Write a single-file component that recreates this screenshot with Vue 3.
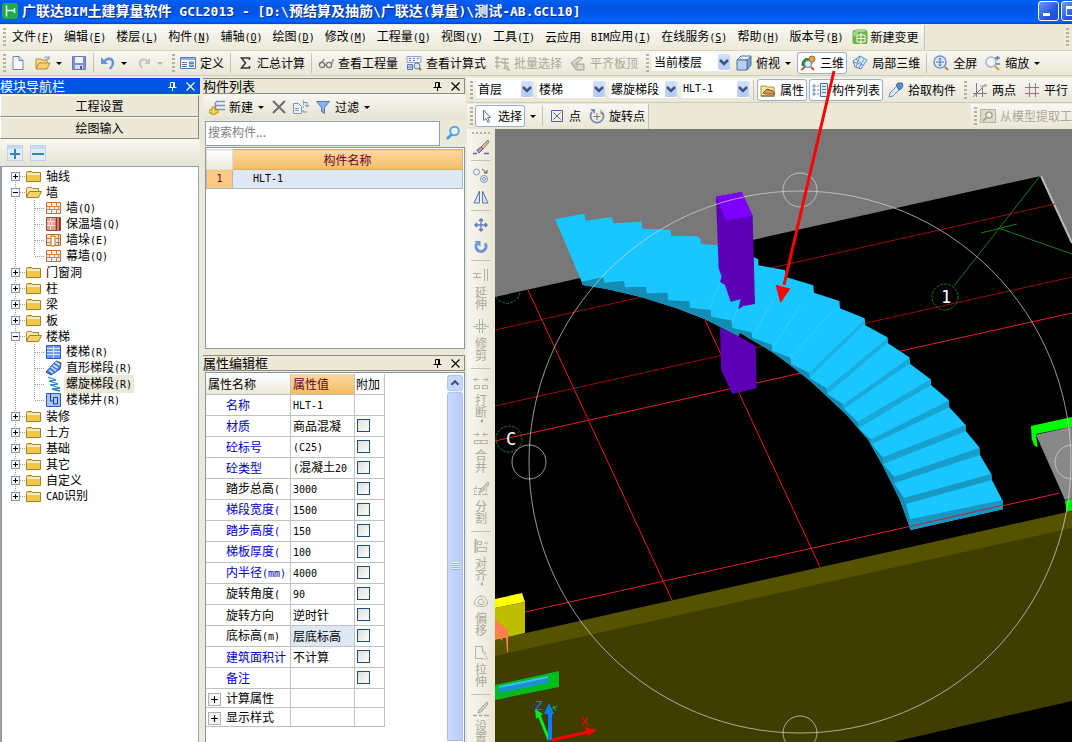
<template>
  <div class="app">
    <!-- 标题栏 -->
    <header class="titlebar">
      <Icon name="logo" />
      <h1><Mix text="广联达BIM土建算量软件 GCL2013 - [D:\预结算及抽筋\广联达(算量)\测试-AB.GCL10]" /></h1>
      <div class="win-btns">
        <button aria-label="最小化"><i class="min"></i></button>
        <button aria-label="最大化"><i class="max"></i></button>
      </div>
    </header>

    <!-- 菜单 -->
    <nav class="menubar">
      <div class="menu-inner">
        <i class="grip"></i>
        <button v-for="m in menus" :key="m.text" class="menu-item">
          <Mix :text="m.text" /><span v-if="m.key" class="lat">(<u>{{ m.key }}</u>)</span>
        </button>
        <button class="menu-item change"><Icon name="change" />新建变更</button>
      </div>
      <i class="grip last"></i>
    </nav>

    <!-- 主工具栏 -->
    <div class="toolbar main-tools">
      <template v-for="(t, i) in mainTools" :key="i">
        <i v-if="t === '|'" class="sep"></i>
        <i v-else-if="t === ':'" class="grip"></i>
        <label v-else-if="t.select" class="combo wide">
          <select :aria-label="t.select"><option>{{ t.select }}</option></select>
          <span class="arrow"><Icon name="down" /></span>
        </label>
        <button v-else class="tool" :class="{ pressed: t.on }" :disabled="t.off" :aria-label="t.label || t.text">
          <Icon :name="t.icon" />
          <span v-if="t.text">{{ t.text }}</span>
          <b v-if="t.caret" class="caret"></b>
        </button>
      </template>
    </div>

    <div class="body">
      <!-- 模块导航栏 -->
      <aside class="nav">
        <div class="panel-head active">
          <h2>模块导航栏</h2>
          <Icon name="pin" /><Icon name="close" />
        </div>
        <button class="nav-btn">工程设置</button>
        <button class="nav-btn">绘图输入</button>
        <div class="nav-tools">
          <button aria-label="展开"><Icon name="plus" /></button>
          <button aria-label="折叠"><Icon name="minus" /></button>
        </div>
        <ul class="tree">
          <li v-for="(n, i) in tree" :key="n.text">
            <div class="node">
              <svg class="guide" width="26" height="16" viewBox="0 0 26 16">
                <path class="dots" :d="rootGuide(i)" />
                <rect x="11.5" y="4.5" width="8" height="8" fill="#fbfbf8" stroke="#7898b5" />
                <path :d="n.open ? 'M13 8.5h5' : 'M13 8.5h5M15.5 6v5'" stroke="#000" />
              </svg>
              <Icon :name="n.open ? 'folderOpen' : 'folder'" />
              <span class="name"><Mix :text="n.text" /></span>
            </div>
            <ul v-if="n.open">
              <li v-for="(c, j) in n.children" :key="c.text" class="node">
                <svg class="guide" width="46" height="16" viewBox="0 0 46 16">
                  <path class="dots" :d="'M15.5 0v16M34.5 0v' + (j === n.children.length - 1 ? 8 : 16) + 'M35 8.5h10'" />
                </svg>
                <Icon :name="c.icon" />
                <span class="name" :class="{ selected: c.selected }"><Mix :text="c.text" /></span>
              </li>
            </ul>
          </li>
        </ul>
      </aside>

      <div class="middle">
        <!-- 构件列表 -->
        <section class="panel list-panel">
          <div class="panel-head">
            <h2>构件列表</h2>
            <Icon name="pin" /><Icon name="close" />
          </div>
          <div class="list-tools">
            <button class="tool"><Icon name="new" /><span>新建</span><b class="caret"></b></button>
            <button class="tool" aria-label="删除"><Icon name="del" /></button>
            <button class="tool" aria-label="复制"><Icon name="copyDoc" /></button>
            <button class="tool"><Icon name="filter" /><span>过滤</span><b class="caret"></b></button>
          </div>
          <div class="search">
            <input type="text" v-model="keyword" placeholder="搜索构件..." aria-label="搜索构件">
            <button aria-label="搜索"><Icon name="search" /></button>
          </div>
          <div class="sheet">
            <table class="comp-table">
              <thead>
                <tr><th class="no"></th><th>构件名称</th></tr>
              </thead>
              <tbody>
                <tr><td class="no lat">1</td><td class="lat">HLT-1</td></tr>
              </tbody>
            </table>
          </div>
        </section>

        <!-- 属性编辑框 -->
        <section class="panel prop-panel">
          <div class="panel-head">
            <h2>属性编辑框</h2>
            <Icon name="pin" /><Icon name="close" />
          </div>
          <div class="sheet prop-sheet">
            <table class="prop-table">
              <thead>
                <tr><th class="c1">属性名称</th><th class="c2">属性值</th><th class="c3">附加</th></tr>
              </thead>
              <tbody>
                <tr v-for="p in props" :key="p.name">
                  <td class="pname" :class="{ blue: p.blue }"><Mix :text="p.name" /></td>
                  <td :class="{ focus: p.focus }"><Mix :text="p.value" /></td>
                  <td><input v-if="p.check !== false" type="checkbox" :aria-label="p.name"></td>
                </tr>
                <tr v-for="g in groups" :key="g" class="group">
                  <td><button class="expand" :aria-label="'展开' + g"><Icon name="expand" /></button>{{ g }}</td>
                  <td></td>
                  <td></td>
                </tr>
              </tbody>
            </table>
            <div class="scrollbar">
              <button aria-label="向上"><Icon name="up" /></button>
              <div class="thumb"><i></i></div>
            </div>
          </div>
        </section>
      </div>

      <main class="work">
        <div class="toolbar">
          <i class="grip"></i>
          <label v-for="(c, i) in combos" :key="c" class="combo" :class="{ short: i === 0 }">
            <select :class="{ lat: i === 3 }" :aria-label="c"><option>{{ c }}</option></select>
            <span class="arrow"><Icon name="down" /></span>
          </label>
          <i class="sep"></i>
          <button class="tool pressed"><Icon name="prop" /><span>属性</span></button>
          <button class="tool pressed"><Icon name="list" /><span>构件列表</span></button>
          <button class="tool"><Icon name="pick" /><span>拾取构件</span></button>
          <i class="grip"></i>
          <button class="tool"><Icon name="two" /><span>两点</span></button>
          <button class="tool"><Icon name="para" /><span>平行</span></button>
        </div>
        <div class="toolbar flat">
          <div class="tool-group">
            <i class="grip"></i>
            <button class="tool pressed"><Icon name="cursor" /><span>选择</span></button>
            <button class="tool slim" aria-label="选择方式"><b class="caret"></b></button>
            <i class="sep"></i>
            <button class="tool"><Icon name="point" /><span>点</span></button>
            <button class="tool"><Icon name="rotPoint" /><span>旋转点</span></button>
          </div>
          <div class="tool-group docked">
            <i class="grip"></i>
            <button class="tool slim" disabled><Icon name="extract" /><span>从模型提取工</span></button>
          </div>
        </div>

        <div class="stage">
          <div class="side-tools">
            <i class="grip-h"></i>
            <template v-for="(t, i) in sideTools" :key="i">
              <i v-if="t === '|'" class="hsep"></i>
              <button v-else :class="{ labelled: t.text }" :disabled="!!t.text" :aria-label="t.text || t.label">
                <Icon :name="t.icon" />
                <span v-if="t.text">{{ t.text }}</span>
                <b v-if="t.more" class="more"></b>
              </button>
            </template>
          </div>

          <!-- 三维视图 -->
          <svg class="scene" viewBox="495 129 577 613" preserveAspectRatio="xMinYMin slice">
            <rect x="495" y="129" width="577" height="613" fill="#787878" />
            <path d="M495 297L1041 176L1072 243V742H495Z" fill="#000" />
            <path d="M1041 176L1072 243" stroke="#bbb" stroke-width="2" />

            <g stroke="#9c0d0d" fill="none">
              <path d="M495 330L1055 204M495 406L1072 277" />
              <path d="M495 441L1072 313M525 612L1060 493M528 290L672 600M705 320L820 567" stroke="#e61c1c" />
            </g>

            <g stroke="#1d7a1d" fill="none">
              <path d="M954 286L1040 176M981 233L1017 224M998 228L1072 254" />
              <circle cx="945" cy="297" r="13" stroke-dasharray="3 1" />
              <circle cx="509" cy="439" r="13" stroke-dasharray="3 1" />
              <path d="M496 297a13 13 0 0 0 24 -5" stroke-dasharray="3 1" />
            </g>
            <text x="946" y="303" class="axis-no">1</text>
            <text x="511" y="445" class="axis-no">C</text>

            <!-- 楼梯与柱 -->
            <g transform="translate(740 170) scale(.3333)">
              <path d="M873 768L996 741V770L888 792L893 832L882 826L875 805Z" fill="#0f0" />
              <path d="M888 794L996 770V985L975 990Z" fill="#888" />
              <path d="M975 992L996 985V1022L980 1026Z" fill="#0e0" />

              <path d="M-60 472L-5 498L47 528L50 655L-23 672L-57 600Z" fill="#5c00b8" />
              <path :d="stairBody" fill="#1ac6ff" />
              <path :d="stairSide" fill="#158cb3" />
              <path v-for="(r, i) in risers" :key="i" :d="riserPath(r)" :fill="r[8]" />
              <path d="M-90 412L-60 340M-25 460L-5 412M38 500L102 385M100 530L185 400M152 565L275 425" stroke="#38ceff" stroke-width="3" fill="none" />
              <path d="M512 1069L788 1006" stroke="#c0202c" stroke-width="3" />

              <path d="M-72 80L5 66L38 138L45 402L10 408L-5 418L2 388L-28 395L-45 345L-60 335L-55 320L-64 295Z" fill="#5c00b8" />
              <path d="M-72 80L5 66L38 138L-42 152Z" fill="#7d00ff" />
            </g>

            <!-- 前方墙体 -->
            <path d="M495 640L1072 511V742H495Z" fill="#565300" />
            <path d="M495 656L1072 528V742H495Z" fill="#3f3e00" />
            <path d="M893 742L1072 701V742Z" fill="#000" />
            <path d="M495 599L522 593L525 602L495 608Z" fill="#ff0" />
            <path d="M495 608L525 602V633L495 640Z" fill="#bebe00" />
            <path d="M495 619L508 630V652H507L506 638L503 637L502 641L500 638L495 639Z" fill="#ff7f50" />
            <path d="M495 685L559 671V687L495 700Z" fill="#00bc1c" />
            <path d="M499 686L548 676V683L499 693Z" fill="#1e8fd0" />
            <path d="M499 686L548 676V678L499 688Z" fill="#30c8e8" />

            <g stroke="#d8d8d8" stroke-opacity=".7" fill="none">
              <circle cx="800" cy="462" r="271" />
              <circle cx="800" cy="190" r="17" />
              <circle cx="529" cy="462" r="17" />
              <circle cx="1072" cy="462" r="17" />
              <circle cx="800" cy="733" r="17" />
            </g>

            <!-- 坐标轴 -->
            <g fill="none" stroke-width="3">
              <path d="M549 740L539 715" stroke="#0e2" />
              <path d="M550 740V711" stroke="#0a7cff" stroke-width="4" />
              <path d="M552 740L588 732" stroke="#f00" />
            </g>
            <path d="M535 709L543 714L536 719Z" fill="#0e2" />
            <path d="M549 703L554 714H544Z" fill="#0a7cff" />
            <path d="M597 730L585 727L588 736Z" fill="#f00" />
            <path d="M551 709L557 706M553 706L556 711" stroke="#0c2" />
            <text x="535" y="710" class="axis-name z">Z</text>
            <text x="580" y="726" class="axis-name x">X</text>
          </svg>
        </div>
      </main>
    </div>

    <!-- 指示箭头 -->
    <svg class="pointer" width="70" height="240" viewBox="0 0 70 240">
      <path d="M64 2L14 216" stroke="#f00" stroke-width="3" />
      <path d="M5 216L20 219L11 234Z" fill="#f00" transform="rotate(3 12 225)" />
    </svg>
  </div>
</template>

<script setup>
import { h, ref } from 'vue'

const keyword = ref('')

// 图标
const icons = {
  logo: '<rect width="16" height="16" rx="3" fill="#22a94f"/><path d="M4.500 2.500v11M4.500 7.500h8M12.500 5v5" stroke="#eafff0" stroke-width="1.500" fill="none"/>',
  change: '<rect x=".5" y="1" width="15" height="14" rx="2" fill="#6cb33f"/><path d="M0 5l5-5h8v3H6L3 8z" fill="#a6d785"/><path d="M5 6h8v7H5zM9 4v11M5 9.500h8" stroke="#fff" fill="none"/>',
  newDoc: '<path d="M2 1.500h6l4 4v9H2z" fill="#f5f9ff" stroke="#7487aa"/><path d="M8 1.500v4h4" fill="#c6d6ee" stroke="#7487aa"/>',
  open: '<path d="M1 13V4h5l1 1h5v3" fill="#f8dc8f" stroke="#b58a3a"/><path d="M1 14l3-6h11l-3 6z" fill="#fbd06a" stroke="#b58a3a"/><path d="M9 3c2-2 4-1 5 1m0-3v3h-3" stroke="#7b93b8" fill="none"/>',
  save: '<path d="M1.500 1.500h13v13h-13z" fill="#7f8fd0" stroke="#6a79b8"/><path d="M4 2h8v6H4z" fill="#eef3ff"/><path d="M4 10h8v4H4z" fill="#d5dcf2"/><path d="M9 11h2v3H9z" fill="#4a5795"/>',
  undo: '<path d="M4 7c3-5 9-4 9 1 0 3-2 4-3 6" stroke="#6a93dd" stroke-width="2.400" fill="none"/><path d="M1 2v7h7z" fill="#6a93dd"/>',
  redo: '<path d="M12 7c-3-4-8-3-8 1 0 3 1 4 2 5" stroke="#c3c3c0" stroke-width="2" fill="none"/><path d="M14 3v6H8z" fill="#c3c3c0"/>',
  define: '<path d="M.5 2.500h15v11H.5z" fill="#fff" stroke="#5577b5"/><path d="M1 3h14v2H1z" fill="#8fb0e8"/><path d="M2 7.500h5M2 9.500h5M2 11.500h5" stroke="#4a70b8"/><path d="M9.500 7h4v1.500h-4zM9.500 10h4v1.500h-4z" fill="#dbe7fa" stroke="#4a70b8"/>',
  sum: '<path d="M12.500 5V3H4.500l4 5-4 5h8v-2" stroke="#333" stroke-width="1.500" fill="none"/>',
  glasses: '<path d="M6.600 10h1.800M1.500 9l5-5M13.500 9l2-5" stroke="#888" stroke-width="1.300"/><circle cx="4" cy="10" r="2.600" fill="none" stroke="#777" stroke-width="1.300"/><circle cx="11" cy="10" r="2.600" fill="none" stroke="#777" stroke-width="1.300"/>',
  formula: '<path d="M1 1.500h14v6H1z" fill="#eef3fa" stroke="#8ea5c8"/><path d="M3 3.500h2m2 0h2m2 0h2M3 5.500h2m2 0h2" stroke="#6180ae"/><path d="M1.500 9.500h5v5h-5zM1 12h6" fill="#c9d9f0" stroke="#5a78b0"/><circle cx="11" cy="11" r="3" fill="#d5e6f7" stroke="#778"/><path d="M13 13l2 2" stroke="#a76a38" stroke-width="2"/>',
  batch: '<path d="M1 3h5M1 7h8M1 11h5M3 1v13M7 4h8M11 3v9M8 8h7M13 11l2 4-5-2z" stroke="#b5b2a4" stroke-width="1.300" fill="none"/>',
  slab: '<path d="M1 8l8-6 4 1-7 6h8v6H6z" fill="#c8c5b9" stroke="#a9a698"/><path d="M3 8l7-4M8 11h5M8 13h5" stroke="#f3f1e8"/>',
  cube: '<path d="M1 5l4-4h10l-4 4z" fill="#e8f1fb" stroke="#51709c"/><path d="M11 5l4-4v9l-4 5z" fill="#7fa3d1" stroke="#51709c"/><path d="M1 5h10v10H1z" fill="#b5d0ee" stroke="#51709c"/>',
  three: '<path d="M2 10c0-6 5-8 8-5l2 4c-3 3-7 4-10 1z" fill="#2e9b3c" stroke="#176325"/><circle cx="12" cy="4" r="3" fill="#e7a63a" stroke="#a86b14"/><circle cx="8" cy="9" r="3.500" fill="#d7efff" stroke="#5b7f9f"/><path d="M5 12l-4 3M11 12l3 3" stroke="#d05a20" stroke-width="2"/>',
  part3: '<path d="M1 6l7-5 7 4-6 9-6-2z" fill="#dbe9f8" stroke="#6287b8"/><path d="M4 4l7 6M8 1l-4 11M12 4L7 13M1 7l10 3" stroke="#6f96c8" fill="none"/>',
  full: '<circle cx="7" cy="7" r="6" fill="#e1edfa" stroke="#7094c6" stroke-width="1.500"/><path d="M7 3v8M3 7h8M5.500 4.500L7 3l1.500 1.500M5.500 9.500L7 11l1.500-1.500" stroke="#4b73b4" fill="none"/><path d="M12 12l3 3" stroke="#b98b59" stroke-width="2.400"/>',
  zoom: '<circle cx="6" cy="7" r="5" fill="#f0f6fc" stroke="#9fb3ca" stroke-width="1.500"/><path d="M10 3h5M12.500 1v4M11 9h4" stroke="#5e7fae" stroke-width="1.500"/><path d="M10 11l4 4" stroke="#d9a13e" stroke-width="2.400"/>',
  down: '<path d="M4 6l4 4 4-4" stroke="#3a577f" stroke-width="2.600" fill="none"/>',
  up: '<path d="M4 10l4-4 4 4" stroke="#3a577f" stroke-width="2.600" fill="none"/>',
  pin: '<path d="M6.500 4.500h4v5h-4zM9.500 4v6M4.500 9.500h8M8.500 10v3" stroke="currentColor" fill="none"/>',
  close: '<path d="M4.500 4.500l8 8M12.500 4.500l-8 8" stroke="currentColor" stroke-width="1.100"/>',
  plus: '<rect x=".5" y=".5" width="15" height="15" fill="#e3ecfa" stroke="#c0d2ee"/><path d="M1 1h14v3H1z" fill="#c7daf5"/><path d="M3 9h10M8 4v10" stroke="#3287b8" stroke-width="2"/>',
  minus: '<rect x=".5" y=".5" width="15" height="15" fill="#e3ecfa" stroke="#c0d2ee"/><path d="M1 1h14v3H1z" fill="#c7daf5"/><path d="M2 9h12" stroke="#3287b8" stroke-width="2"/>',
  folder: '<path d="M.5 13.500V4.500l1-1h4l1 1h8v9z" fill="#f3c748" stroke="#a2822f"/><path d="M1 6h13" stroke="#fdf0bd" stroke-width="2"/>',
  folderOpen: '<path d="M.5 13.500V4.500l1-1h4l1 1h6v3" fill="#fbe7a4" stroke="#a2822f"/><path d="M.5 13.500l3-6h12l-3 6z" fill="#f8d465" stroke="#a2822f"/>',
  wall: '<path d="M.5 2.500h14v11H.5z" fill="#fdf1e6" stroke="#c36d35"/><path d="M1 6.500h14M1 9.500h14M5.500 3v3M10.500 3v3M3.500 7v2M8.500 7v2M12.500 7v2M5.500 10v3M10.500 10v3" stroke="#d5824c"/>',
  insWall: '<path d="M.5 1.500h14v13H.5z" fill="#d9a394" stroke="#a14b3a"/><path d="M1 5.500h8M1 9.500h8M4.500 2v3M3 6v3M6 6v3M4.500 10v4" stroke="#f6e0da"/><path d="M10.500 2v12M13.500 2v12" stroke="#9c2d1c" stroke-width="1.500"/>',
  stack: '<path d="M.5 2.500h14v11H.5z" fill="#fbe6d2" stroke="#b56a2c"/><path d="M5 4h4v10H5z" fill="#fff" stroke="#b56a2c"/><path d="M1 6.500h4M1 10.500h4M12.500 3v10M10 6.500h5M10 10.500h5" stroke="#c77b3e"/>',
  stair: '<path d="M.5 1.500h14v13H.5z" fill="#6c98ee" stroke="#2f58b8"/><path d="M1 4.500h13M1 7.500h13M1 10.500h13M7.500 2v12" stroke="#dce8ff"/>',
  straight: '<path d="M0 12L10 1l5 2-1 6-9 6z" fill="#4b80dc" stroke="#1c439a"/><path d="M3 10l4 3M5 7l5 4M7 5l5 3M9 2l5 3" stroke="#d4e4ff" stroke-width="1.500"/>',
  spiral: '<path d="M2 1l8 3-7 1 9 3-8 1 10 3-8 1 8 2" stroke="#2a86c8" fill="none" stroke-width="1.300"/>',
  well: '<path d="M.5 1.500h14v13H.5z" fill="#a9c4fb" stroke="#2f58b8"/><path d="M4.500 2v7h3V5.500h4V12h-4V9" stroke="#173f9f" fill="none"/>',
  new: '<path d="M7 2.500h9M7 6.500h9M7 10.500h9M6.500 3v8" stroke="#7b90b5" stroke-width="1.500"/><path d="M3 8h3v3h3v3H6v2H3v-2H0v-3h3z" fill="#f6d64d" stroke="#b09020"/>',
  del: '<path d="M2 2l12 12M14 2L2 14" stroke="#6c6c6c" stroke-width="2"/>',
  copyDoc: '<path d="M.5 4.500h5l3 3v7h-8z" fill="#f4f8ff" stroke="#8094bd"/><path d="M2 9.500h4M2 11.500h4M10 3.500h4v4M12 6l2 2 2-2M14 13h-4v-2" stroke="#7a90bd" fill="none"/><path d="M10.500 1v8" stroke="#9aabd0" stroke-dasharray="2 1"/>',
  filter: '<path d="M1.500 2.500h13l-5 6v6l-3-2v-4z" fill="#8fb2ec" stroke="#5577bb"/>',
  search: '<circle cx="9.500" cy="6" r="4.300" fill="#e6f5ff" stroke="#55a8e6" stroke-width="2"/><path d="M6.500 9.500L2 14" stroke="#4a9bdc" stroke-width="2.600"/>',
  expand: '<path d="M2 8h12M8 2v12" stroke="#000" stroke-width="2"/>',
  prop: '<path d="M1 4h5l1 1h7v9H1z" fill="#fbe6a8" stroke="#b48a34"/><path d="M3 11l4-4 6 2 2 3H6z" fill="#d89a54" stroke="#7c5324"/><path d="M1 14h14" stroke="#6c5a30"/>',
  list: '<path d="M1 3h2v2H1zM1 7h2v2H1zM1 11h2v2H1zM5 4h2M5 8h2M5 12h2" stroke="#6f89b5" fill="none"/><path d="M8.500 1.500h7v13h-7z" fill="#e5effd" stroke="#4c6fae"/><path d="M10 4.500h4M10 7.500h4M10 10.500h4" stroke="#4c6fae"/>',
  pick: '<path d="M1 15l1-4 7-7 3 3-7 7z" fill="#dbeafa" stroke="#6c89ae"/><path d="M8 3l2-2h4l1 3-2 3-2 1z" fill="#5b93c8" stroke="#3b6a9c"/>',
  two: '<path d="M4.500 1v14M1 11.500h14M1 15L14 2M10.500 6v9" stroke="#7e7b86" fill="none"/><path d="M8 4h7" stroke="#b28cae"/>',
  para: '<path d="M5.500 1v14M11.500 1v14" stroke="#7c86ac"/><path d="M1 5.500h14M1 11.500h14" stroke="#b8675f"/>',
  cursor: '<path d="M5.500 2v10.500l2.500-2 2 4 1.500-1-2-4h3z" fill="#fff" stroke="#5d6f96"/>',
  point: '<path d="M2.500 2.500h11v11h-11zM4.500 4.500l7 7M11.500 4.500l-7 7" stroke="#5a5da0" fill="none"/>',
  rotPoint: '<path d="M3 4a6.500 6.500 0 1 0 10 0" stroke="#6c8db5" stroke-width="1.800" fill="none"/><path d="M1 1h5v5z" fill="#6c8db5"/><path d="M8 5v7M4.500 8.500h7" stroke="#777"/><path d="M12 2v4h3" stroke="#b66" fill="none"/>',
  extract: '<path d="M.5 1.500h15v13H.5z" fill="#dedbcd" stroke="#b5b2a4"/><circle cx="9" cy="7" r="3" fill="#f1efe6" stroke="#a9a698" stroke-width="1.500"/><path d="M7 9l-4 4" stroke="#a9a698" stroke-width="2"/>',
  eraser: '<path d="M15 1L8 8l2 2 6-7z" fill="#d9c49a" stroke="#8b7858"/><path d="M8 8l-4 3 2 3 4-4z" fill="#c79ac0" stroke="#77508a"/><path d="M0 14.500h4M11 14.500h5" stroke="#556a94" stroke-width="1.500"/>',
  copy: '<circle cx="3.500" cy="5" r="3" fill="none" stroke="#7e96c8"/><circle cx="11" cy="12" r="3.500" fill="none" stroke="#7e96c8"/><circle cx="11" cy="12" r="1.500" fill="none" stroke="#7e96c8"/><path d="M9 2l5 4M14 3v3h-3" stroke="#555" fill="none"/>',
  mirror: '<path d="M6.500 2v12H1zM9.500 2v12H15z" fill="#d6e2f7" stroke="#5a78b4"/>',
  move: '<path d="M8 2v12M2 8h12M6 4l2-2 2 2M6 12l2 2 2-2M4 6L2 8l2 2M12 6l2 2-2 2" stroke="#5b78b4" stroke-width="1.300" fill="none"/>',
  rotate: '<path d="M4 4.500a5 5 0 1 0 8 0" stroke="#6b93dc" stroke-width="3" fill="none"/><path d="M1.500 2h6v6z" fill="#6b93dc"/>',
  extend: '<path d="M0 6.500h8M0 10.500h8M3.500 6v5M11.500 2v12M14.500 2v12" stroke="#b5b2a4"/>',
  trim: '<path d="M0 8.500h5M11 8.500h5M6.500 1v14M9.500 1v14M3 6.500h10M3 10.500h10" stroke="#b5b2a4"/>',
  breakk: '<path d="M1 4.500h5M3 2.500l-2 2 2 2M10 4.500h5M13 2.500l2 2-2 2M1.500 10.500h5v3h-5zM9.500 10.500h5v3h-5z" stroke="#b5b2a4" fill="none"/>',
  merge: '<path d="M1 4.500h5M4 2.500l2 2-2 2M10 4.500h5M12 2.500l-2 2 2 2M1.500 10.500h13v3h-13zM8 10v4" stroke="#b5b2a4" fill="none"/>',
  split: '<path d="M1 7.500h9M1 13.500h14M3 5l-2 9M14 8l-2 6" stroke="#b5b2a4" stroke-dasharray="3 1"/><path d="M15 1L8 8l-2 4 4-2 6-7z" fill="#d5d2c4" stroke="#a9a698"/>',
  align: '<path d="M2.500 1v14" stroke="#b5b2a4" stroke-width="2"/><path d="M4.500 3.500h4v3h-4zM4.500 9.500h9v4h-9zM11 5h4" stroke="#b5b2a4" fill="none"/>',
  offset: '<path d="M1.500 10c0-3 3-7 6.500-7s6.500 4 6.500 7-3 3.500-6.500 3.500-6.500-.5-6.500-3.500z" fill="none" stroke="#b0ad9f"/><path d="M5 10c0-2 1.500-4 3-4s3 2 3 4-6 2-6 0z" fill="none" stroke="#b0ad9f"/>',
  stretch: '<path d="M10 14.500H2.500v-12h7v4l4 3" stroke="#b5b2a4" fill="none"/><path d="M9 7l6 8H9" stroke="#b5b2a4" stroke-dasharray="2 1" fill="none"/>',
  setup: '<path d="M14 1L6 9l-1 3 3-1 7-8z" fill="#d5d2c4" stroke="#a9a698"/><path d="M0 14.500h4M6 14.500h3M11 14.500h5" stroke="#a9a698" stroke-width="1.500"/>'
}

const Icon = ({ name }) =>
  h('svg', { class: 'icon', width: 16, height: 16, viewBox: '0 0 16 16', 'aria-hidden': 'true', innerHTML: icons[name] })
Icon.props = ['name']

// 中英文混排：西文用等宽字体
const Mix = ({ text }) =>
  h('span', { class: 'mix' }, (text || '').split(/([\x20-\x7e]+)/).filter(Boolean).map(s =>
    /^[\x20-\x7e]/.test(s) ? h('span', { class: 'lat' }, s) : s
  ))
Mix.props = ['text']

const menus = [
  { text: '文件', key: 'F' },
  { text: '编辑', key: 'E' },
  { text: '楼层', key: 'L' },
  { text: '构件', key: 'N' },
  { text: '辅轴', key: 'O' },
  { text: '绘图', key: 'D' },
  { text: '修改', key: 'M' },
  { text: '工程量', key: 'Q' },
  { text: '视图', key: 'V' },
  { text: '工具', key: 'T' },
  { text: '云应用' },
  { text: 'BIM应用', key: 'I' },
  { text: '在线服务', key: 'S' },
  { text: '帮助', key: 'H' },
  { text: '版本号', key: 'B' }
]

const mainTools = [
  ':',
  { icon: 'newDoc', label: '新建' },
  { icon: 'open', label: '打开', caret: true },
  { icon: 'save', label: '保存' },
  '|',
  { icon: 'undo', label: '撤销', caret: true },
  { icon: 'redo', label: '恢复', caret: true, off: true },
  ':',
  { icon: 'define', text: '定义' },
  '|',
  { icon: 'sum', text: '汇总计算' },
  '|',
  { icon: 'glasses', text: '查看工程量' },
  { icon: 'formula', text: '查看计算式' },
  { icon: 'batch', text: '批量选择', off: true },
  { icon: 'slab', text: '平齐板顶', off: true },
  ':',
  { select: '当前楼层' },
  { icon: 'cube', text: '俯视', caret: true },
  { icon: 'three', text: '三维', on: true },
  { icon: 'part3', text: '局部三维' },
  '|',
  { icon: 'full', text: '全屏' },
  { icon: 'zoom', text: '缩放', caret: true }
]

const combos = ['首层', '楼梯', '螺旋梯段', 'HLT-1']

const tree = [
  { text: '轴线' },
  {
    text: '墙',
    open: true,
    children: [
      { text: '墙(Q)', icon: 'wall' },
      { text: '保温墙(Q)', icon: 'insWall' },
      { text: '墙垛(E)', icon: 'stack' },
      { text: '幕墙(Q)', icon: 'wall' }
    ]
  },
  { text: '门窗洞' },
  { text: '柱' },
  { text: '梁' },
  { text: '板' },
  {
    text: '楼梯',
    open: true,
    children: [
      { text: '楼梯(R)', icon: 'stair' },
      { text: '直形梯段(R)', icon: 'straight' },
      { text: '螺旋梯段(R)', icon: 'spiral', selected: true },
      { text: '楼梯井(R)', icon: 'well' }
    ]
  },
  { text: '装修' },
  { text: '土方' },
  { text: '基础' },
  { text: '其它' },
  { text: '自定义' },
  { text: 'CAD识别' }
]

// 树的竖向连接线，首尾只画半截
const rootGuide = (i) => {
  const from = i === 0 ? 8 : 0
  const to = i === tree.length - 1 ? 8 : 16
  return `M15.5 ${from}V${to}M20 8.5h6`
}

const props = [
  { name: '名称', value: 'HLT-1', blue: true, check: false },
  { name: '材质', value: '商品混凝', blue: true },
  { name: '砼标号', value: '(C25)', blue: true },
  { name: '砼类型', value: '(混凝土20', blue: true },
  { name: '踏步总高(', value: '3000' },
  { name: '梯段宽度(', value: '1500', blue: true },
  { name: '踏步高度(', value: '150', blue: true },
  { name: '梯板厚度(', value: '100', blue: true },
  { name: '内半径(mm)', value: '4000', blue: true },
  { name: '旋转角度(', value: '90' },
  { name: '旋转方向', value: '逆时针' },
  { name: '底标高(m)', value: '层底标高', focus: true },
  { name: '建筑面积计', value: '不计算', blue: true },
  { name: '备注', value: '', blue: true }
]
const groups = ['计算属性', '显示样式']

const sideTools = [
  { icon: 'eraser', label: '删除' },
  '|',
  { icon: 'copy', label: '复制' },
  { icon: 'mirror', label: '镜像' },
  '|',
  { icon: 'move', label: '移动' },
  { icon: 'rotate', label: '旋转' },
  '|',
  { icon: 'extend', text: '延伸' },
  { icon: 'trim', text: '修剪' },
  '|',
  { icon: 'breakk', text: '打断', more: true },
  { icon: 'merge', text: '合并' },
  { icon: 'split', text: '分割' },
  '|',
  { icon: 'align', text: '对齐', more: true },
  { icon: 'offset', text: '偏移' },
  { icon: 'stretch', text: '拉伸' },
  '|',
  { icon: 'setup', text: '设置' }
]

// 螺旋梯段轮廓
const outer = '-555 147 -467 131 -463 152 -385 141 -380 160 -295 155 -293 176 -208 179 -206 198 -128 199 -118 206 -118 222 -65 226 42 262 55 268 55 286 135 300 140 322 220 346 222 368 298 393 300 415 374 445 376 466 442 502 444 520 508 562 510 581 572 628 573 645 626 690 628 712 677 765 678 784 718 832 720 855 754 912 756 930 788 992 788 1018 512 1080'
const inner = '480 990 430 890 385 810 320 735 262 680 210 632 150 585 100 548 40 512 0 488 -5 498 -60 470 -105 448 -190 415 -300 380 -400 357 -472 345'
const saw = '-475 335 -410 321 -407 338 -348 333 -345 352 -282 350 -280 370 -218 368 -215 391 -152 394 -150 413 -88 420 -86 440 -24 452 -23 474 35 487 37 503 95 524 97 542 152 563 154 583 208 608 210 625 260 655 262 672 310 703 312 716 353 755 355 775 393 808 395 823 428 862 430 882 462 920 462 940 490 982 498 1002 510 1048 512 1080'
const stairBody = `M${outer} ${inner} -475 335Z`
const stairSide = `M${saw} ${inner}Z`

// 踢面：内上、外上、外下、内下
const risers = [
  [208, 608, 374, 448, 376, 460, 210, 622, '#1ab2e4'],
  [260, 655, 442, 504, 444, 518, 262, 672, '#1aaee0'],
  [310, 703, 508, 564, 510, 580, 312, 716, '#19aadb'],
  [353, 755, 572, 628, 573, 645, 355, 775, '#19a8d8'],
  [393, 808, 626, 692, 628, 712, 395, 823, '#18a4d3'],
  [428, 862, 677, 765, 678, 784, 430, 882, '#18a0ce'],
  [462, 920, 718, 834, 720, 855, 462, 940, '#179dca'],
  [490, 984, 754, 912, 756, 930, 498, 1002, '#1799c5'],
  [510, 1048, 788, 990, 788, 1018, 512, 1080, '#1796c2']
]
const riserPath = (r) => `M${r.slice(0, 8).join(' ')}Z`
</script>

<style>
body {
  background: #ece9d8;
  overflow: hidden;
}

.icon {
  flex: none;
  display: block;
}

.mix {
  white-space: pre;
}

.lat {
  font-family: "DejaVu Sans Mono", monospace;
  font-size: 10px;
}

.titlebar .lat {
  font-size: 13px;
}
</style>

<style scoped>
.app {
  position: relative;
  display: flex;
  flex-direction: column;
  height: 100vh;
  overflow: hidden;
  background: #ece9d8;
  color: #000;
  font-family: "Noto Sans CJK SC", sans-serif;
  font-size: 12px;
  line-height: 16px;
}

button {
  margin: 0;
  padding: 0;
  border: 0;
  background: none;
  color: inherit;
  font-family: inherit;
  font-size: 12px;
  line-height: 16px;
  white-space: nowrap;
}

h1, h2, ul {
  margin: 0;
  padding: 0;
  list-style: none;
}

/* 标题栏 */
.titlebar {
  flex: none;
  display: flex;
  align-items: center;
  gap: 4px;
  height: 24px;
  padding-left: 2px;
  box-sizing: border-box;
  padding-bottom: 3px;
  background: linear-gradient(#0560f5, #0054e3 30%, #0058ee 65%, #0066ff 88%, #0046c8);
  color: #fff;
}

.titlebar h1 {
  flex: 1;
  font-size: 14px;
  line-height: 20px;
  font-weight: bold;
  text-shadow: 1px 1px #0a2a80;
  white-space: nowrap;
}

.win-btns {
  display: flex;
  gap: 2px;
  width: 34px;
  overflow: hidden;
}

.win-btns button {
  flex: none;
  display: flex;
  width: 21px;
  height: 20px;
  padding: 4px;
  box-sizing: border-box;
  border: 1px solid #fff;
  border-radius: 3px;
  background: linear-gradient(135deg, #6f9cf5, #2359d8 60%, #1c4fd0);
}

.min {
  align-self: flex-end;
  width: 7px;
  height: 3px;
  background: #fff;
}

.max {
  width: 7px;
  height: 6px;
  border: 1px solid #fff;
  border-top-width: 3px;
}

/* 菜单与工具栏 */
.menubar {
  flex: none;
  display: flex;
  align-items: center;
  justify-content: space-between;
  height: 26px;
  overflow: hidden;
  background: #ece9d8;
}

.menu-inner {
  display: flex;
  align-items: center;
  height: 25px;
  border-right: 1px solid #c5c2b2;
  background: linear-gradient(#fafaf7, #ece9d8);
}

.menu-item {
  padding: 0 5px;
}

.menu-inner .grip {
  margin-right: 1px;
}

.change {
  display: flex;
  gap: 3px;
  padding-left: 3px;
}

.toolbar {
  flex: none;
  display: flex;
  align-items: center;
  gap: 2px;
  height: 25px;
  overflow: hidden;
  box-sizing: border-box;
  background: linear-gradient(#f8f7f2, #e9e6d5);
  border-bottom: 1px solid #d0ccba;
}

.main-tools {
  height: 26px;
  border-top: 1px solid #d8d4c4;
}

.toolbar.flat {
  height: 26px;
  justify-content: space-between;
  background: #ece9d8;
  border: 0;
}

.tool-group {
  display: flex;
  align-items: center;
  gap: 2px;
  height: 25px;
  border-right: 1px solid #c5c2b2;
  background: linear-gradient(#f8f7f2, #e9e6d5);
}

.docked {
  gap: 1px;
  border: 0;
}

.grip {
  flex: none;
  width: 3px;
  height: 18px;
  margin-left: 3px;
  background: repeating-linear-gradient(#b5b19e 0 2px, transparent 2px 4px);
}

.grip.last {
  margin-right: 3px;
}

.sep {
  flex: none;
  width: 1px;
  height: 20px;
  margin: 0 1px;
  background: #c8c4b2;
}

.tool {
  flex: none;
  display: flex;
  align-items: center;
  gap: 4px;
  height: 22px;
  padding: 0 3px;
}

.tool:disabled {
  color: #aca899;
}

.tool.slim {
  padding: 0 2px;
}

.docked .tool {
  padding-right: 0;
}

.tool.pressed {
  background: #fff;
  border-radius: 3px;
  box-shadow: inset 0 0 0 1px #98b0cc;
}

.caret {
  width: 0;
  height: 0;
  margin: 0 1px;
  border: 3px solid transparent;
  border-top-color: #000;
  border-bottom: 0;
}

.tool:disabled .caret {
  border-top-color: #b5b2a4;
}

.combo {
  flex: none;
  display: flex;
  align-items: center;
  width: 68px;
  height: 18px;
  margin: 0 1px 3px;
  background: #fff;
}

.combo.short {
  width: 57px;
}

.combo.wide {
  width: 78px;
}

.combo select {
  flex: 1;
  min-width: 0;
  height: 18px;
  padding: 0 0 0 2px;
  border: 0;
  appearance: none;
  background: none;
  color: #000;
  font-family: inherit;
  font-size: 12px;
  white-space: nowrap;
}

.combo select.lat {
  font-family: "DejaVu Sans Mono", monospace;
  font-size: 10px;
}

.arrow {
  display: flex;
  align-items: center;
  justify-content: center;
  width: 12px;
  height: 16px;
  overflow: hidden;
  border-radius: 2px;
  background: linear-gradient(#d3e0fd, #b4c9f5);
}

/* 主体 */
.body {
  flex: 1;
  display: flex;
  min-height: 0;
  padding-top: 2px;
}

.nav {
  flex: none;
  display: flex;
  flex-direction: column;
  width: 200px;
  margin-right: 3px;
}

.panel-head {
  flex: none;
  display: flex;
  align-items: center;
  gap: 2px;
  height: 16px;
  padding-right: 1px;
  box-sizing: border-box;
  border: 1px solid #8e8b7c;
  border-left: 0;
}

.panel-head h2 {
  flex: 1;
  font-size: 13px;
  line-height: 12px;
  font-weight: normal;
}

.panel-head.active {
  margin-bottom: 1px;
  border-color: #0054e3;
  background: #0054e3;
  color: #fff;
}

.nav-btn {
  flex: none;
  height: 22px;
  margin-right: 1px;
  border: 1px solid #8e8b7c;
  border-top-color: #fff;
  border-left-color: #fff;
  background: #ece9d8;
}

.nav-tools {
  flex: none;
  display: flex;
  align-items: center;
  gap: 7px;
  height: 27px;
  padding-left: 7px;
  background: linear-gradient(#f8f7f2, #e6e3d2);
}

.tree {
  flex: 1;
  margin-right: 1px;
  padding-top: 1px;
  border: 1px solid #8ba0b5;
  border-left: 2px solid #9a9fa6;
  border-bottom: 0;
  background: #fff;
  overflow: hidden;
}

.tree ul {
  margin: 0;
}

.node {
  display: flex;
  align-items: center;
  height: 16px;
}

.guide {
  flex: none;
  margin-left: -2px;
}

.dots {
  fill: none;
  stroke: #a0a0a0;
  stroke-dasharray: 1 1;
}

.name {
  margin-left: 2px;
  padding: 0 2px;
}

.name.selected {
  background: #ece9d8;
}

/* 中间面板 */
.middle {
  flex: none;
  display: flex;
  flex-direction: column;
  width: 262px;
  margin-right: 2px;
}

.panel {
  display: flex;
  flex-direction: column;
  min-height: 0;
}

.list-panel {
  flex: 5 5 0;
}

.prop-panel {
  flex: 7 7 0;
}

.list-tools {
  flex: none;
  display: flex;
  align-items: center;
  gap: 0;
  height: 26px;
  padding-left: 3px;
  background: linear-gradient(#f8f7f2, #e6e3d2);
}

.search {
  flex: none;
  display: flex;
  align-items: center;
  height: 26px;
  padding-left: 2px;
}

.search input {
  flex: 1;
  min-width: 0;
  height: 25px;
  margin-right: 5px;
  padding: 0 2px 4px;
  box-sizing: border-box;
  border: 1px solid #8ba0b5;
  background: #fff;
  font-family: inherit;
  font-size: 12px;
}

.search input::placeholder {
  color: #808080;
}

.search button {
  width: 20px;
}

.sheet {
  flex: 1;
  min-height: 0;
  margin: 1px 0 6px 2px;
  padding: 1px 1px 1px 0;
  border: 1px solid #8098b0;
  background: #fff;
  overflow: hidden;
}

table {
  border-collapse: collapse;
  table-layout: fixed;
}

th {
  font-weight: normal;
}

.comp-table {
  width: 100%;
}

.comp-table th {
  height: 19px;
  padding: 0;
  border: 1px solid #d8b070;
  background: linear-gradient(#fcd9a0, #f2bd64);
  color: #6b0030;
}

.comp-table th.no {
  width: 25px;
  border-color: #e0ddd0;
  background: linear-gradient(#fff, #ece9d8);
}

.comp-table td {
  height: 18px;
  padding: 0 0 0 20px;
  border: 1px solid #b0b8c4;
  background: #dfe8f5;
}

.comp-table td.no {
  padding: 0;
  text-align: center;
  background: #fcc982;
  color: #6b0030;
}

.prop-sheet {
  display: flex;
  justify-content: space-between;
  align-items: flex-start;
  margin-bottom: 0;
  border-bottom: 0;
}

.prop-table {
  width: 179px;
}

.prop-table th {
  height: 20px;
  padding: 0 0 0 2px;
  border-right: 1px solid #c8c4b8;
  border-bottom: 1px solid #c0c0c0;
  background: linear-gradient(#fff, #ece9d8);
  text-align: left;
}

.prop-table th.c1 {
  width: 82px;
}

.prop-table th.c2 {
  width: 61px;
  background: linear-gradient(#fcd9a0, #f2bd64);
  color: #6b0030;
}

.prop-table th.c3 {
  padding-left: 1px;
  background: #fff;
}

.prop-table td {
  height: 20px;
  padding: 0 0 0 2px;
  border: 1px solid #c0c0c0;
  border-left-width: 0;
  line-height: 16px;
  white-space: nowrap;
  overflow: hidden;
}

.prop-table .pname {
  padding-left: 20px;
}

.prop-table .blue {
  color: #0000c8;
}

.prop-table .focus {
  background: #dfe8f5;
}

.prop-table .group td {
  height: 18px;
}

.prop-table input {
  display: block;
  width: 13px;
  height: 13px;
  margin: 0;
  appearance: none;
  border: 1px solid #1c5180;
  background: linear-gradient(135deg, #dcdcd7, #fff);
}

.expand {
  display: inline-block;
  width: 13px;
  height: 13px;
  margin-right: 5px;
  padding: 1px;
  box-sizing: border-box;
  border: 1px solid #b0b0b0;
  background: #f4f4f0;
  vertical-align: middle;
}

.expand .icon {
  width: 9px;
  height: 9px;
}

.scrollbar {
  display: flex;
  flex-direction: column;
  gap: 1px;
  width: 16px;
  height: 100%;
  background: #f3f2ec;
}

.scrollbar button {
  flex: none;
  height: 16px;
  margin-top: 1px;
  border: 1px solid #b0c4ee;
  border-radius: 3px;
  box-sizing: border-box;
  background: #c8d7fb;
  overflow: hidden;
}

.scrollbar .icon {
  width: 14px;
  height: 14px;
}

.thumb {
  flex: 1;
  display: flex;
  align-items: center;
  justify-content: center;
  border: 1px solid #a8bff0;
  border-radius: 3px 3px 0 0;
  background: linear-gradient(90deg, #cad8fd, #b9cbf8);
}

.thumb i {
  width: 7px;
  height: 8px;
  background: repeating-linear-gradient(#eef4fe 0 1px, #8cb0f8 1px 2px);
}

/* 绘图区 */
.work {
  flex: 1;
  display: flex;
  flex-direction: column;
  min-width: 0;
}

.stage {
  flex: 1;
  display: flex;
  min-height: 0;
}

.side-tools {
  flex: none;
  display: flex;
  flex-direction: column;
  align-items: center;
  width: 28px;
  overflow: hidden;
  background: linear-gradient(90deg, #f8f7f2, #e9e6d5);
}

.side-tools button {
  flex: none;
  display: flex;
  flex-direction: column;
  align-items: center;
  padding: 3px 0;
}

.side-tools .labelled {
  padding-bottom: 4px;
  color: #aca899;
}

.side-tools span {
  width: 12px;
  margin: 3px 0 1px;
  line-height: 12px;
  white-space: normal;
  word-break: break-all;
}

.more {
  width: 0;
  height: 0;
  border: 2px solid transparent;
  border-right: 3px solid #aca899;
  border-left: 0;
}

.grip-h {
  flex: none;
  width: 18px;
  height: 2px;
  margin: 3px 0 2px;
  background: repeating-linear-gradient(90deg, #b5b19e 0 2px, transparent 2px 4px);
}

.hsep {
  flex: none;
  width: 20px;
  height: 1px;
  margin: 2px 0 3px;
  background: #c8c4b2;
}

.scene {
  flex: 1;
  display: block;
  min-width: 0;
  height: 100%;
}

.axis-no {
  fill: #fff;
  font-family: "DejaVu Sans Mono", monospace;
  font-size: 17px;
  text-anchor: middle;
}

.axis-name {
  font-family: "Liberation Sans", sans-serif;
  font-size: 13px;
}

.axis-name.z {
  fill: #0a7cff;
}

.axis-name.x {
  fill: #e00;
}

.pointer {
  position: absolute;
  left: 770px;
  top: 69px;
  pointer-events: none;
}
</style>
